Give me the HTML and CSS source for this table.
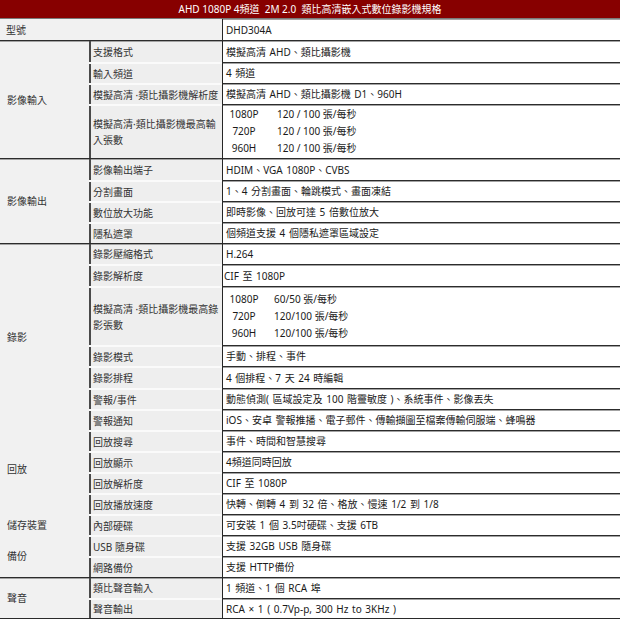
FILE: index.html
```html
<!DOCTYPE html>
<html lang="zh-Hant">
<head>
<meta charset="utf-8">
<title>AHD 1080P 4頻道 規格</title>
<link rel="stylesheet" href="styles.css">
</head>
<body>
<div class="page">
  <div class="title">AHD 1080P 4頻道&nbsp; 2M 2.0&nbsp; 類比高清嵌入式數位錄影機規格</div>
  <table class="spec">
    <colgroup><col class="c1"><col class="c2"><col class="c3"></colgroup>
    <tr class="r model"><td colspan="2" class="grp top">型號</td><td class="val">DHD304A</td></tr>

    <tr class="r first tallr"><td rowspan="4" class="grp">影像輸入</td><td class="sub">支援格式</td><td class="val">模擬高清 AHD、類比攝影機</td></tr>
    <tr class="r"><td class="sub">輸入頻道</td><td class="val">4 頻道</td></tr>
    <tr class="r"><td class="sub">模擬高清 ·類比攝影機解析度</td><td class="val">模擬高清 AHD、類比攝影機 D1、960H</td></tr>
    <tr class="tall1"><td class="sub wrap">模擬高清·類比攝影機最高輸入張數</td><td class="val">
      <div class="rates">
        <span class="res">1080P</span><span>120 / 100 張/每秒</span>
        <span class="res">720P</span><span>120 / 100 張/每秒</span>
        <span class="res">960H</span><span>120 / 100 張/每秒</span>
      </div></td></tr>

    <tr class="r first tallr"><td rowspan="4" class="grp">影像輸出</td><td class="sub">影像輸出端子</td><td class="val">HDIM、VGA 1080P、CVBS</td></tr>
    <tr class="r"><td class="sub">分割畫面</td><td class="val">1、4 分割畫面、輪跳模式、畫面凍結</td></tr>
    <tr class="r"><td class="sub">數位放大功能</td><td class="val">即時影像、回放可達 5 倍數位放大</td></tr>
    <tr class="r"><td class="sub">隱私遮罩</td><td class="val">個頻道支援 4 個隱私遮罩區域設定</td></tr>

    <tr class="r first"><td rowspan="7" class="grp">錄影</td><td class="sub">錄影壓縮格式</td><td class="val">H.264</td></tr>
    <tr class="r tallr"><td class="sub">錄影解析度</td><td class="val tight">CIF 至 1080P</td></tr>
    <tr class="tall2"><td class="sub wrap">模擬高清 ·類比攝影機最高錄影張數</td><td class="val">
      <div class="rates rates2">
        <span class="res">1080P</span><span>60/50 張/每秒</span>
        <span class="res">720P</span><span>120/100 張/每秒</span>
        <span class="res">960H</span><span>120/100 張/每秒</span>
      </div></td></tr>
    <tr class="r"><td class="sub">錄影模式</td><td class="val">手動、排程、事件</td></tr>
    <tr class="r tallr"><td class="sub">錄影排程</td><td class="val">4 個排程、7 天 24 時編輯</td></tr>
    <tr class="r"><td class="sub">警報/事件</td><td class="val">動態偵測( 區域設定及 100 階靈敏度 )、系統事件、影像丟失</td></tr>
    <tr class="r"><td class="sub">警報通知</td><td class="val">iOS、安卓 警報推播、電子郵件、傳輸擷圖至檔案傳輸伺服端、蜂鳴器</td></tr>

    <tr class="r"><td rowspan="4" class="grp cont playback">回放</td><td class="sub">回放搜尋</td><td class="val">事件、時間和智慧搜尋</td></tr>
    <tr class="r"><td class="sub">回放顯示</td><td class="val">4頻道同時回放</td></tr>
    <tr class="r"><td class="sub">回放解析度</td><td class="val">CIF 至 1080P</td></tr>
    <tr class="r"><td class="sub">回放播放速度</td><td class="val">快轉、倒轉 4 到 32 倍、格放、慢速 1/2 到 1/8</td></tr>
    <tr class="r"><td class="grp cont">儲存裝置</td><td class="sub">內部硬碟</td><td class="val">可安裝 1 個 3.5吋硬碟、支援 6TB</td></tr>
    <tr class="r"><td rowspan="2" class="grp cont">備份</td><td class="sub">USB 隨身碟</td><td class="val">支援 32GB USB 隨身碟</td></tr>
    <tr class="r"><td class="sub">網路備份</td><td class="val">支援 HTTP備份</td></tr>

    <tr class="r first"><td rowspan="2" class="grp last">聲音</td><td class="sub">類比聲音輸入</td><td class="val">1 頻道、1 個 RCA 埠</td></tr>
    <tr class="r lastrow"><td class="sub">聲音輸出</td><td class="val">RCA × 1 ( 0.7Vp-p, 300 Hz to 3KHz )</td></tr>
  </table>
</div>
</body>
</html>
```

FILE: styles.css
```css
* {
  box-sizing: border-box;
}

body {
  margin: 0;
  background: #ffffff;
  font-family: "Noto Sans", "Noto Sans CJK TC", sans-serif;
  font-size: 10px;
  color: #1e1e1e;
}

.page {
  width: 620px;
}

.title {
  height: 19px;
  line-height: 19px;
  background: #870000;
  color: #ffffff;
  text-align: center;
  font-size: 10px;
  border-bottom: 1px solid #7a7a7a;
}

.spec {
  width: 620px;
  table-layout: fixed;
  border-collapse: separate;
  border-spacing: 0;
}

.c1 { width: 89px; }
.c2 { width: 133px; }
.c3 { width: 398px; }

.spec td {
  padding: 0;
  vertical-align: middle;
  line-height: 14px;
  white-space: nowrap;
}

.r { height: 21px; }
.r.tallr { height: 22px; }
.model { height: 21px; }
.tall1 { height: 54px; }
.tall2 { height: 59px; }

.grp {
  background: #f1f1f1;
  color: #333333;
  padding-left: 7px !important;
}

.grp.top {
  padding-left: 6px !important;
}

.sub {
  background: #eeeeee;
  color: #333333;
  padding-left: 4px !important;
  border-top: 2px solid #fafafa;
  box-shadow: inset 2px 0 0 #4a4a4a;
}

.sub.wrap {
  white-space: normal !important;
  line-height: 16px !important;
  word-break: break-all;
}

.val {
  padding-left: 3px !important;
  border-left: 1px solid #262626;
  border-top: 1px solid #2c2c2c;
  box-shadow: inset 0 1px 0 #a3a3a3;
  color: #1a1a1a;
  word-spacing: 1px;
}

.val.tight {
  padding-left: 1px !important;
}

.first td {
  border-top: 1px solid #2c2c2c;
}

.first .sub {
  box-shadow: inset 2px 0 0 #4a4a4a, inset 0 1px 0 #a3a3a3;
}

.first .grp {
  box-shadow: inset 0 1px 0 #a3a3a3;
}

.model td {
  border-top: 0;
}

.playback {
  padding-bottom: 6px !important;
}

.lastrow td,
.grp.last {
  border-bottom: 1px solid #2a2a2a;
}

.rates {
  display: grid;
  grid-template-columns: 36px auto;
  column-gap: 15px;
  line-height: 17px;
  word-spacing: 0;
}

.rates2 {
  column-gap: 12px;
}

.res {
  text-align: center;
}
```
